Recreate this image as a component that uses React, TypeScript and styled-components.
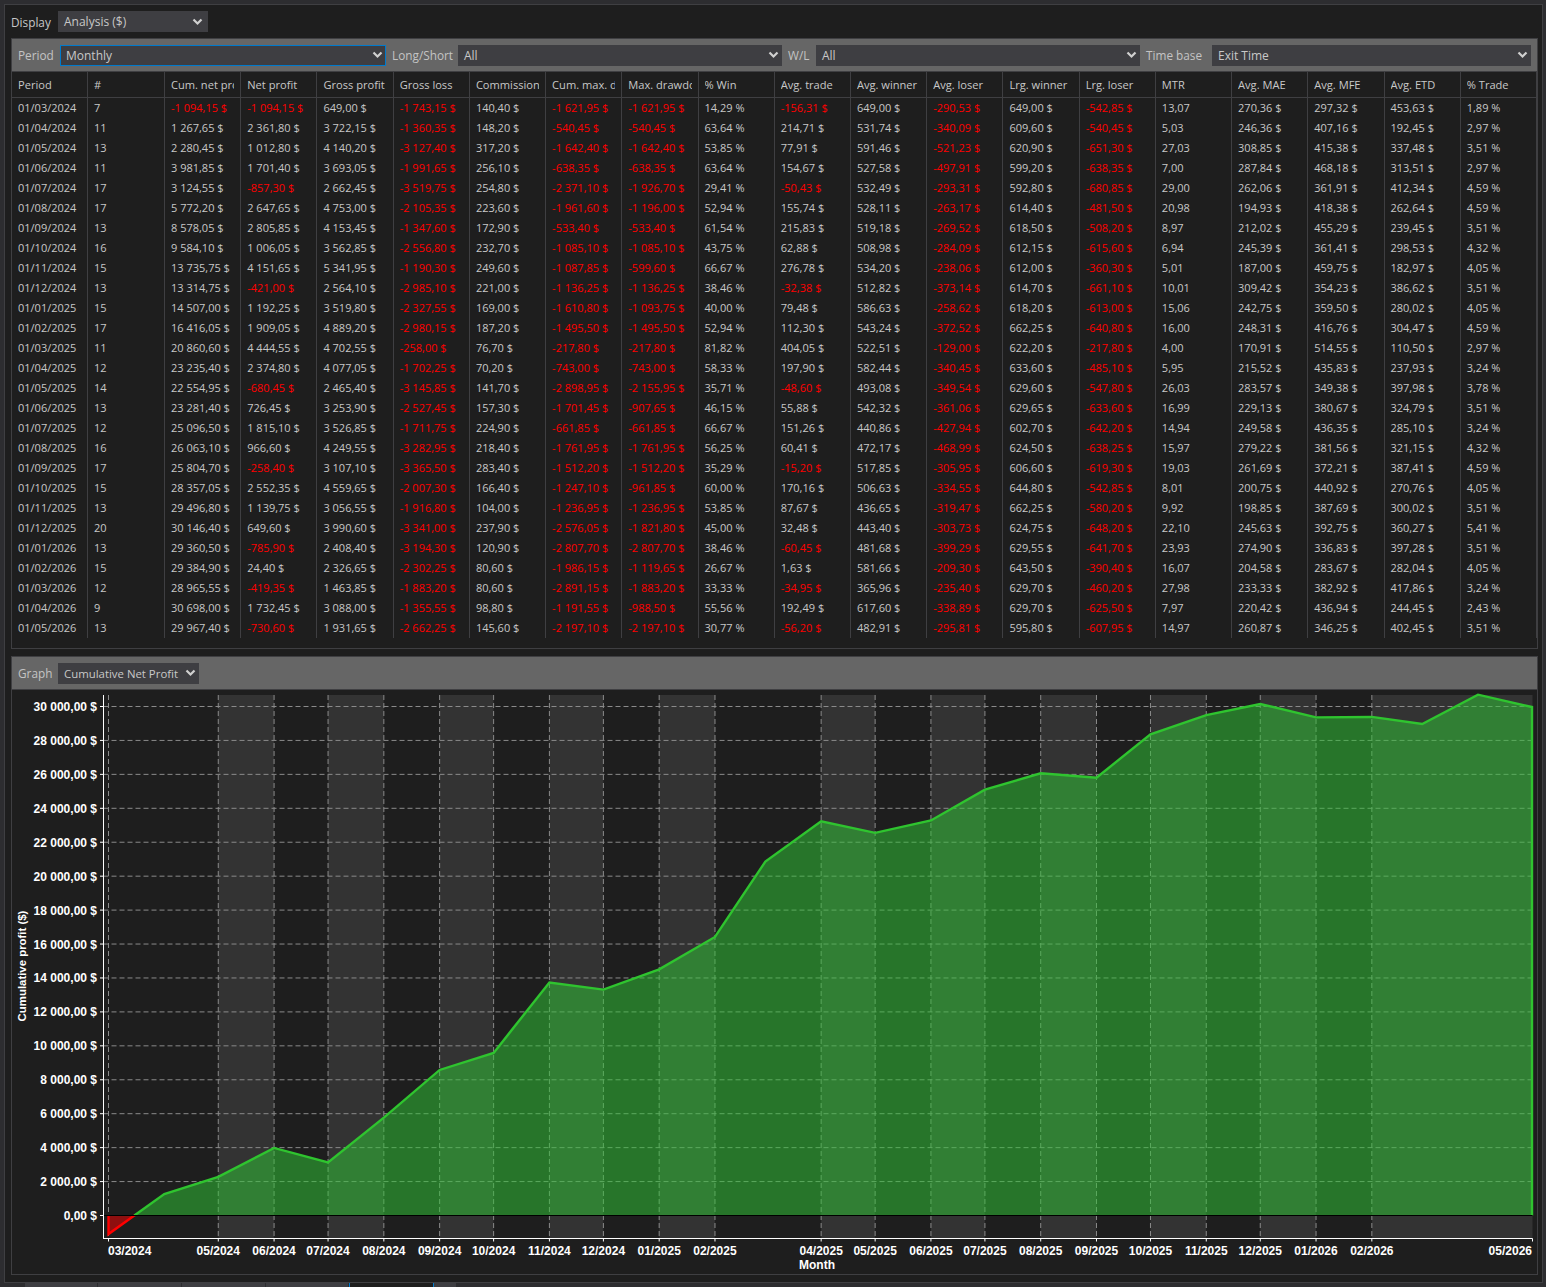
import React from "react";
import styled, { createGlobalStyle } from "styled-components";

const UI_FONT = `"Open Sans", "Noto Sans", sans-serif`;

const GlobalStyle = createGlobalStyle`
  html, body {
    margin: 0;
    padding: 0;
    background: #2d2d30;
    height: 100%;
    overflow: hidden;
  }
`;

const Page = styled.div`
  width: 1546px;
  height: 1287px;
  padding-top: 4px;
  box-sizing: border-box;
  font-family: ${UI_FONT};
  font-size: 11px;
  color: #c8c8c8;
  overflow: hidden;
`;

const Frame = styled.div`
  margin: 0 3px 0 4px;
  height: 1279px;
  box-sizing: border-box;
  border: 1px solid #3f3f42;
  background: #1e1e1e;
  padding: 6px 4px 0 6px;
`;

const DisplayRow = styled.div`
  display: flex;
  align-items: center;
  gap: 6px;
  height: 21px;
  margin-bottom: 6px;
`;

const Label = styled.span<{ $width: number; $dim?: boolean }>`
  width: ${(p) => p.$width}px;
  flex: none;
  font-size: 11.8px;
  color: ${(p) => (p.$dim ? "#c4c4c4" : "#c8c8c8")};
  white-space: nowrap;
`;

const SelectBox = styled.div<{ $width: number; $focus?: boolean; $compact?: boolean; $arrowGap: number }>`
  width: ${(p) => p.$width}px;
  height: 21px;
  box-sizing: border-box;
  flex: none;
  display: flex;
  align-items: center;
  justify-content: space-between;
  padding: 0 ${(p) => p.$arrowGap}px 0 ${(p) => (p.$focus ? 5 : 6)}px;
  background: #3e3e42;
  border: ${(p) => (p.$focus ? "1px solid #007acc" : "none")};
  color: #c8c8c8;
  font-size: ${(p) => (p.$compact ? 11.4 : 12)}px;
  white-space: nowrap;
`;

const Panel = styled.div<{ $height: number }>`
  height: ${(p) => p.$height}px;
  box-sizing: border-box;
  border: 1px solid #3f3f42;
  margin-bottom: 7px;
  overflow: hidden;
`;

const Toolbar = styled.div`
  height: 33px;
  box-sizing: border-box;
  background: #666666;
  border-bottom: 1px solid #3f3f42;
  display: flex;
  align-items: center;
  gap: 6px;
  padding-left: 6px;
`;

const Table = styled.table`
  table-layout: fixed;
  border-collapse: separate;
  border-spacing: 0;
  width: 1525px;
`;

const Head = styled.th`
  height: 26px;
  padding: 0 6px;
  box-sizing: border-box;
  text-align: left;
  font-weight: 400;
  font-size: 11.1px;
  color: #c8c8c8;
  border-right: 1px solid #3f3f42;
  border-bottom: 1px solid #3f3f42;
`;

const HeadText = styled.span`
  display: block;
  white-space: nowrap;
  overflow: hidden;
`;

const Cell = styled.td<{ $neg?: boolean }>`
  height: 20px;
  padding: 0 4px 2px 6px;
  box-sizing: border-box;
  font-size: 11px;
  color: ${(p) => (p.$neg ? "#ff0000" : "#c8c8c8")};
  white-space: nowrap;
  overflow: hidden;
  border-right: 1px solid #3f3f42;
`;

const ChartArea = styled.svg`
  display: block;
`;

const AxisText = styled.text`
  font-family: "Liberation Sans", Arial, sans-serif;
  font-size: 12px;
  font-weight: 700;
  fill: #ffffff;
`;

const AxisTitle = styled(AxisText)`
  font-size: 11.4px;
`;

const TabStrip = styled.div`
  display: flex;
  height: 4px;
  margin-left: 25px;
`;

const Tab = styled.div<{ $width: number; $active?: boolean }>`
  width: ${(p) => p.$width}px;
  box-sizing: border-box;
  background: ${(p) => (p.$active ? "#1e1e1e" : "#3e3e42")};
  border-right: 1px solid ${(p) => (p.$active ? "#007acc" : "#2d2d30")};
  border-left: ${(p) => (p.$active ? "1px solid #007acc" : "none")};
`;

const Chevron = () => (
  <svg width="11" height="8" viewBox="0 0 11 8" fill="none">
    <path d="M1.5 1.5 L5.5 5.5 L9.5 1.5" stroke="#d0d0d0" strokeWidth="2.2" />
  </svg>
);

type SelectProps = { width: number; value: string; focus?: boolean; compact?: boolean; arrowGap?: number };

const Select = ({ width, value, focus, compact, arrowGap = 3.5 }: SelectProps) => (
  <SelectBox $width={width} $focus={focus} $compact={compact} $arrowGap={arrowGap}>
    {value}
    <Chevron />
  </SelectBox>
);

const HEADERS = [
  "Period", "#", "Cum. net profit", "Net profit", "Gross profit", "Gross loss", "Commission",
  "Cum. max. drawdown", "Max. drawdown", "% Win", "Avg. trade", "Avg. winner", "Avg. loser",
  "Lrg. winner", "Lrg. loser", "MTR", "Avg. MAE", "Avg. MFE", "Avg. ETD", "% Trade",
];

const RAW = `01/03/2024|7|-1 094,15|-1 094,15|649,00|-1 743,15|140,40|-1 621,95|-1 621,95|14,29|-156,31|649,00|-290,53|649,00|-542,85|13,07|270,36|297,32|453,63|1,89
01/04/2024|11|1 267,65|2 361,80|3 722,15|-1 360,35|148,20|-540,45|-540,45|63,64|214,71|531,74|-340,09|609,60|-540,45|5,03|246,36|407,16|192,45|2,97
01/05/2024|13|2 280,45|1 012,80|4 140,20|-3 127,40|317,20|-1 642,40|-1 642,40|53,85|77,91|591,46|-521,23|620,90|-651,30|27,03|308,85|415,38|337,48|3,51
01/06/2024|11|3 981,85|1 701,40|3 693,05|-1 991,65|256,10|-638,35|-638,35|63,64|154,67|527,58|-497,91|599,20|-638,35|7,00|287,84|468,18|313,51|2,97
01/07/2024|17|3 124,55|-857,30|2 662,45|-3 519,75|254,80|-2 371,10|-1 926,70|29,41|-50,43|532,49|-293,31|592,80|-680,85|29,00|262,06|361,91|412,34|4,59
01/08/2024|17|5 772,20|2 647,65|4 753,00|-2 105,35|223,60|-1 961,60|-1 196,00|52,94|155,74|528,11|-263,17|614,40|-481,50|20,98|194,93|418,38|262,64|4,59
01/09/2024|13|8 578,05|2 805,85|4 153,45|-1 347,60|172,90|-533,40|-533,40|61,54|215,83|519,18|-269,52|618,50|-508,20|8,97|212,02|455,29|239,45|3,51
01/10/2024|16|9 584,10|1 006,05|3 562,85|-2 556,80|232,70|-1 085,10|-1 085,10|43,75|62,88|508,98|-284,09|612,15|-615,60|6,94|245,39|361,41|298,53|4,32
01/11/2024|15|13 735,75|4 151,65|5 341,95|-1 190,30|249,60|-1 087,85|-599,60|66,67|276,78|534,20|-238,06|612,00|-360,30|5,01|187,00|459,75|182,97|4,05
01/12/2024|13|13 314,75|-421,00|2 564,10|-2 985,10|221,00|-1 136,25|-1 136,25|38,46|-32,38|512,82|-373,14|614,70|-661,10|10,01|309,42|354,23|386,62|3,51
01/01/2025|15|14 507,00|1 192,25|3 519,80|-2 327,55|169,00|-1 610,80|-1 093,75|40,00|79,48|586,63|-258,62|618,20|-613,00|15,06|242,75|359,50|280,02|4,05
01/02/2025|17|16 416,05|1 909,05|4 889,20|-2 980,15|187,20|-1 495,50|-1 495,50|52,94|112,30|543,24|-372,52|662,25|-640,80|16,00|248,31|416,76|304,47|4,59
01/03/2025|11|20 860,60|4 444,55|4 702,55|-258,00|76,70|-217,80|-217,80|81,82|404,05|522,51|-129,00|622,20|-217,80|4,00|170,91|514,55|110,50|2,97
01/04/2025|12|23 235,40|2 374,80|4 077,05|-1 702,25|70,20|-743,00|-743,00|58,33|197,90|582,44|-340,45|633,60|-485,10|5,95|215,52|435,83|237,93|3,24
01/05/2025|14|22 554,95|-680,45|2 465,40|-3 145,85|141,70|-2 898,95|-2 155,95|35,71|-48,60|493,08|-349,54|629,60|-547,80|26,03|283,57|349,38|397,98|3,78
01/06/2025|13|23 281,40|726,45|3 253,90|-2 527,45|157,30|-1 701,45|-907,65|46,15|55,88|542,32|-361,06|629,65|-633,60|16,99|229,13|380,67|324,79|3,51
01/07/2025|12|25 096,50|1 815,10|3 526,85|-1 711,75|224,90|-661,85|-661,85|66,67|151,26|440,86|-427,94|602,70|-642,20|14,94|249,58|436,35|285,10|3,24
01/08/2025|16|26 063,10|966,60|4 249,55|-3 282,95|218,40|-1 761,95|-1 761,95|56,25|60,41|472,17|-468,99|624,50|-638,25|15,97|279,22|381,56|321,15|4,32
01/09/2025|17|25 804,70|-258,40|3 107,10|-3 365,50|283,40|-1 512,20|-1 512,20|35,29|-15,20|517,85|-305,95|606,60|-619,30|19,03|261,69|372,21|387,41|4,59
01/10/2025|15|28 357,05|2 552,35|4 559,65|-2 007,30|166,40|-1 247,10|-961,85|60,00|170,16|506,63|-334,55|644,80|-542,85|8,01|200,75|440,92|270,76|4,05
01/11/2025|13|29 496,80|1 139,75|3 056,55|-1 916,80|104,00|-1 236,95|-1 236,95|53,85|87,67|436,65|-319,47|662,25|-580,20|9,92|198,85|387,69|300,02|3,51
01/12/2025|20|30 146,40|649,60|3 990,60|-3 341,00|237,90|-2 576,05|-1 821,80|45,00|32,48|443,40|-303,73|624,75|-648,20|22,10|245,63|392,75|360,27|5,41
01/01/2026|13|29 360,50|-785,90|2 408,40|-3 194,30|120,90|-2 807,70|-2 807,70|38,46|-60,45|481,68|-399,29|629,55|-641,70|23,93|274,90|336,83|397,28|3,51
01/02/2026|15|29 384,90|24,40|2 326,65|-2 302,25|80,60|-1 986,15|-1 119,65|26,67|1,63|581,66|-209,30|643,50|-390,40|16,07|204,58|283,67|282,04|4,05
01/03/2026|12|28 965,55|-419,35|1 463,85|-1 883,20|80,60|-2 891,15|-1 883,20|33,33|-34,95|365,96|-235,40|629,70|-460,20|27,98|233,33|382,92|417,86|3,24
01/04/2026|9|30 698,00|1 732,45|3 088,00|-1 355,55|98,80|-1 191,55|-988,50|55,56|192,49|617,60|-338,89|629,70|-625,50|7,97|220,42|436,94|244,45|2,43
01/05/2026|13|29 967,40|-730,60|1 931,65|-2 662,25|145,60|-2 197,10|-2 197,10|30,77|-56,20|482,91|-295,81|595,80|-607,95|14,97|260,87|346,25|402,45|3,51`;

const ROWS = RAW.split("\n").map((r) => r.split("|"));

const suffix = (col: number) => {
  if (col === 9 || col === 19) return " %";
  if (col < 2 || col === 15) return "";
  return " $";
};

// chart coordinates are page coordinates, the viewBox moves them into the panel
const PLOT = { left: 103.5, right: 1532.5, top: 695, bottom: 1238.5, first: 108.5, zero: 1215.5, y30k: 706.5 };

const dayOf = (period: string) => {
  const [, m, y] = period.split("/").map(Number);
  return Date.UTC(y, m - 1, 1) / 86400000;
};
const toValue = (s: string) => parseFloat(s.replace(/ /g, "").replace(",", "."));

const days = ROWS.map((r) => dayOf(r[0]));
const scaleX = (PLOT.right - 0.5 - PLOT.first) / (days[days.length - 1] - days[0]);
const xAt = (i: number) => PLOT.first + (days[i] - days[0]) * scaleX;
const yAt = (v: number) => PLOT.zero - (v * (PLOT.zero - PLOT.y30k)) / 30000;

const points = ROWS.map((r, i) => ({ x: xAt(i), y: yAt(toValue(r[2])) }));

const HIDDEN_LABELS = new Set([1, 12, 24, 25]);
const ticks = ROWS.map((_, i) => i).filter((i) => !HIDDEN_LABELS.has(i) && i !== ROWS.length - 1);

const monthLabel = (i: number) => ROWS[i][0].slice(3);

const CumulativeChart = () => {
  const first = points[0];
  const second = points[1];
  const last = points[points.length - 1];
  const crossX = first.x + ((PLOT.zero - first.y) / (second.y - first.y)) * (second.x - first.x);
  const rest = points.slice(1).map((p) => `${p.x},${p.y}`).join(" ");
  const greenLine = `${crossX},${PLOT.zero} ${rest} ${last.x},${PLOT.zero}`;
  const redLine = `${first.x},${PLOT.zero} ${first.x},${first.y} ${crossX},${PLOT.zero}`;

  const edges = [...ticks.map(xAt), PLOT.right];
  const gridValues = Array.from({ length: 16 }, (_, i) => i * 2000);

  return (
    <ChartArea width={1525} height={585} viewBox="12 690 1525 585">
      {edges.slice(0, -1).map((x, i) =>
        i % 2 === 1 ? (
          <rect key={x} x={x} y={PLOT.top} width={edges[i + 1] - x} height={PLOT.bottom - PLOT.top} fill="#333333" />
        ) : null
      )}
      {gridValues.slice(1).map((v) => (
        <line key={v} x1={PLOT.left} x2={PLOT.right} y1={yAt(v)} y2={yAt(v)} stroke="#8a8a8a" strokeDasharray="5 3" />
      ))}
      {ticks.map((i) => (
        <line key={i} x1={xAt(i)} x2={xAt(i)} y1={PLOT.top} y2={PLOT.bottom} stroke="#8a8a8a" strokeDasharray="5 3" />
      ))}

      <polygon points={greenLine} fill="rgb(47,197,53)" fillOpacity={0.52} />
      <polygon points={redLine} fill="#ff0000" fillOpacity={0.5} />
      <polyline points={greenLine} fill="none" stroke="#2fc42f" strokeWidth={2.4} />
      <polyline points={redLine} fill="none" stroke="#ff0000" strokeWidth={2.4} />
      <line x1={PLOT.left} x2={PLOT.right} y1={PLOT.zero} y2={PLOT.zero} stroke="#000000" />

      <line x1={PLOT.left} x2={PLOT.left} y1={PLOT.top} y2={PLOT.bottom + 0.5} stroke="#ffffff" />
      <line x1={PLOT.left} x2={PLOT.right} y1={PLOT.bottom} y2={PLOT.bottom} stroke="#ffffff" />
      <line x1={PLOT.right} x2={PLOT.right} y1={PLOT.bottom} y2={PLOT.bottom + 3} stroke="#ffffff" />

      {gridValues.map((v) => (
        <g key={v}>
          <line x1={100} x2={PLOT.left} y1={yAt(v)} y2={yAt(v)} stroke="#ffffff" />
          <AxisText x={97} y={yAt(v) + 4.5} textAnchor="end">
            {v === 0 ? "0,00 $" : `${(v / 1000).toFixed(0)} 000,00 $`}
          </AxisText>
        </g>
      ))}

      {ticks.map((i) => (
        <g key={i}>
          <line x1={xAt(i)} x2={xAt(i)} y1={PLOT.bottom} y2={PLOT.bottom + 3} stroke="#ffffff" />
          <AxisText x={i === 0 ? 108 : xAt(i)} y={1254.5} textAnchor={i === 0 ? "start" : "middle"}>
            {monthLabel(i)}
          </AxisText>
        </g>
      ))}
      <AxisText x={1532} y={1254.5} textAnchor="end">
        {monthLabel(ROWS.length - 1)}
      </AxisText>

      <AxisText x={817} y={1269} textAnchor="middle">
        Month
      </AxisText>
      <AxisTitle x={0} y={0} textAnchor="middle" transform="translate(26 966) rotate(-90)">
        Cumulative profit ($)
      </AxisTitle>
    </ChartArea>
  );
};

const App = () => (
  <Page>
    <GlobalStyle />
    <Frame>
      <DisplayRow>
        <Label $width={41}>Display</Label>
        <Select width={150} value="Analysis ($)" arrowGap={5} />
      </DisplayRow>

      <Panel $height={611}>
        <Toolbar>
          <Label $width={36} $dim>Period</Label>
          <Select width={326} value="Monthly" focus arrowGap={2.5} />
          <Label $width={60} $dim>Long/Short</Label>
          <Select width={324} value="All" />
          <Label $width={22} $dim>W/L</Label>
          <Select width={324} value="All" />
          <Label $width={60} $dim>Time base</Label>
          <Select width={319} value="Exit Time" />
        </Toolbar>
        <Table>
          <colgroup>
            {HEADERS.map((h, i) => (
              <col key={h} width={i === 0 ? 76 : i === 1 ? 77 : undefined} />
            ))}
          </colgroup>
          <thead>
            <tr>
              {HEADERS.map((h) => (
                <Head key={h}>
                  <HeadText>{h}</HeadText>
                </Head>
              ))}
            </tr>
          </thead>
          <tbody>
            {ROWS.map((row) => (
              <tr key={row[0]}>
                {row.map((value, col) => (
                  <Cell key={col} $neg={value.startsWith("-")}>
                    {value + suffix(col)}
                  </Cell>
                ))}
              </tr>
            ))}
          </tbody>
        </Table>
      </Panel>

      <Panel $height={619}>
        <Toolbar>
          <Label $width={34} $dim>Graph</Label>
          <Select width={141} value="Cumulative Net Profit" compact />
        </Toolbar>
        <CumulativeChart />
      </Panel>
    </Frame>
    <TabStrip>
      <Tab $width={73} />
      <Tab $width={84} />
      <Tab $width={84} />
      <Tab $width={83} />
      <Tab $width={85} $active />
      <Tab $width={23} />
    </TabStrip>
  </Page>
);

export default App;
